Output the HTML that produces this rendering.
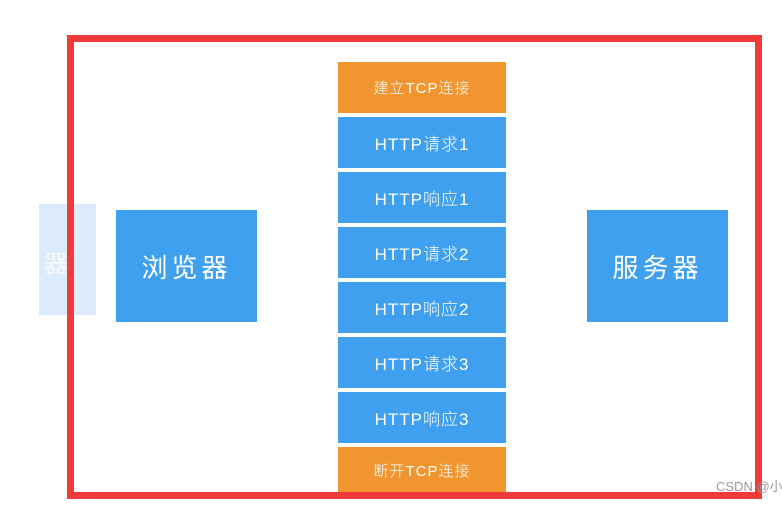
<!DOCTYPE html>
<html><head><meta charset="utf-8"><style>
body{margin:0;width:782px;height:520px;background:#fff;position:relative;overflow:hidden;font-family:"Liberation Sans","Noto Sans CJK SC",sans-serif}
.a{position:absolute}
.s{position:absolute;left:338px;width:168px;height:51px;color:#fff;font-size:17px;display:flex;align-items:center;justify-content:center;letter-spacing:1px;background:#3fa0ef;font-weight:300}
.o{background:#f0952f;font-size:15px}
.big{position:absolute;width:141px;height:112px;background:#3fa0ef;color:#fff;font-size:26px;display:flex;align-items:center;justify-content:center;letter-spacing:4px}
</style></head><body>
<div class="a" style="left:39px;top:204px;width:57px;height:111px;background:#dcebfb"></div>
<div class="a" style="left:44px;top:244px;color:#fff;font-size:24px;opacity:.8">器</div>
<div class="big" style="left:116px;top:210px">浏览器</div>
<div class="big" style="left:587px;top:210px">服务器</div>
<div class="s o" style="top:62px">建立TCP连接</div>
<div class="s" style="top:117px">HTTP请求1</div>
<div class="s" style="top:172px">HTTP响应1</div>
<div class="s" style="top:227px">HTTP请求2</div>
<div class="s" style="top:282px">HTTP响应2</div>
<div class="s" style="top:337px">HTTP请求3</div>
<div class="s" style="top:392px">HTTP响应3</div>
<div class="s o" style="top:447px;height:46px">断开TCP连接</div>
<div class="a" style="left:67px;top:35px;width:681px;height:450px;border:7px solid #f23a3a"></div>
<div class="a" style="left:716px;top:476px;color:#999;font-size:13px;white-space:nowrap">CSDN @小</div>
</body></html>
